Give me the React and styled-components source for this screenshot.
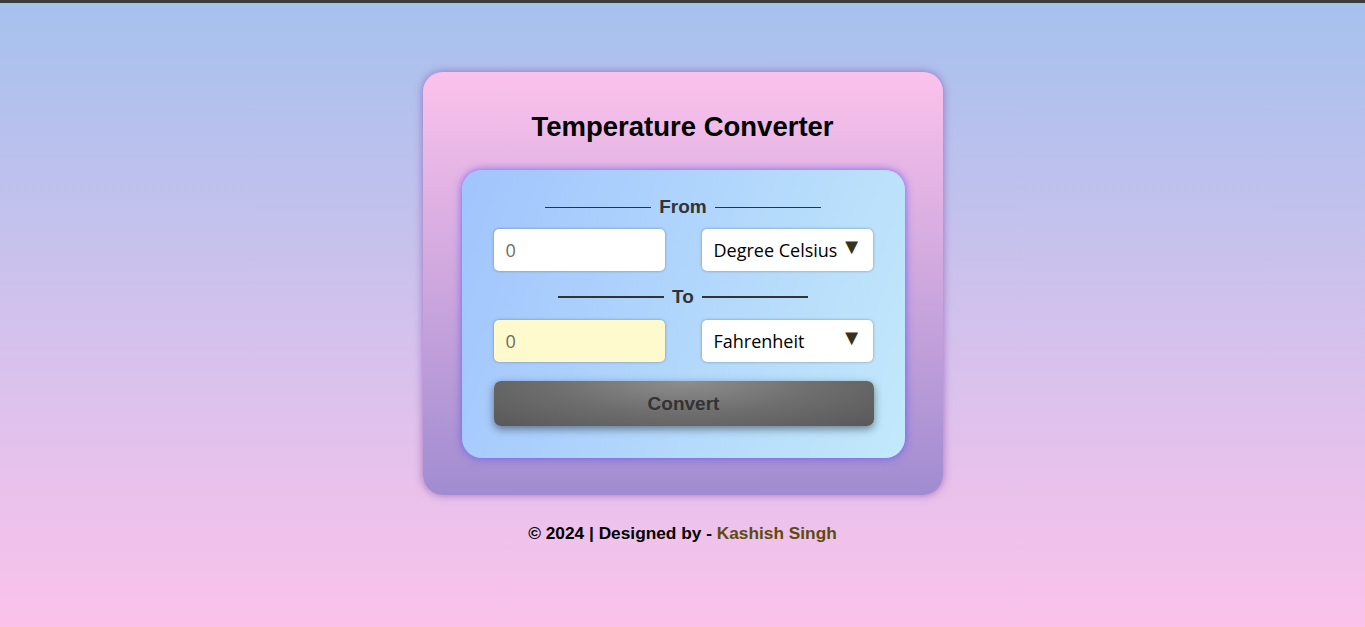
import React, { useState } from "react";
import styled, { createGlobalStyle } from "styled-components";

const GlobalStyle = createGlobalStyle`
  * { box-sizing: border-box; }
  html, body { margin: 0; padding: 0; }
  body {
    font-family: "Liberation Sans", Arial, sans-serif;
    border-top: 3px solid #3b3b3b;
    min-height: 100vh;
    background: linear-gradient(to bottom, #a6c1ee, #fbc2eb);
  }
`;

const Page = styled.div`
  min-height: calc(100vh - 3px);
  display: flex;
  flex-direction: column;
  align-items: center;
  padding-top: 69px;
`;

const Card = styled.div`
  width: 520px;
  height: 423px;
  border-radius: 20px;
  background: linear-gradient(to bottom, #fbc2eb, #a18cd1);
  box-shadow: 0 0 8px rgba(120, 60, 160, 0.6);
  display: flex;
  flex-direction: column;
  align-items: center;
  padding-top: 39px;
`;

const Title = styled.h1`
  margin: 0 0 28px;
  font-size: 27.5px;
  font-weight: bold;
  color: #000;
  line-height: 31px;
`;

const Panel = styled.div`
  width: 443px;
  height: 288px;
  margin-left: 1px;
  border-radius: 20px;
  background: linear-gradient(110deg, #a1c4fd, #c2e9fb);
  box-shadow: 0 0 9px rgba(100, 90, 240, 0.9);
  padding: 26px 32px 0 32px;
  display: flex;
  flex-direction: column;
`;

const Divider = styled.div`
  display: flex;
  align-items: center;
  justify-content: center;
  gap: 8px;
  height: 22px;
  font-size: 19px;
  font-weight: bold;
  color: #333;
  margin-top: ${(p) => p.top || 0}px;
  &::before,
  &::after {
    content: "";
    width: 106px;
    height: ${(p) => (p.thick ? 2 : 1)}px;
    background: #333;
  }
`;

const Row = styled.div`
  display: flex;
  justify-content: space-between;
  margin-top: ${(p) => p.top}px;
`;

const Input = styled.input`
  width: 171px;
  height: 42px;
  border: none;
  border-radius: 5px;
  padding: 0 12px;
  font-size: 18px;
  font-family: "Open Sans", "Noto Sans", sans-serif;
  background: ${(p) => (p.result ? "#fffacd" : "#fff")};
  box-shadow: 0 0 3px rgba(0, 0, 0, 0.35);
  outline: none;
  &::placeholder { color: #6b6b6b; font-weight: 500; }
`;

const SelectBox = styled.div`
  width: 171px;
  height: 42px;
  border-radius: 5px;
  background: #fff;
  box-shadow: 0 0 3px rgba(0, 0, 0, 0.35);
  display: flex;
  align-items: center;
  padding: 0 10px 0 12px;
`;

const Select = styled.select`
  flex: 1;
  min-width: 0;
  appearance: none;
  border: none;
  background: transparent;
  font-family: "Open Sans", "Noto Sans", sans-serif;
  font-size: 18px;
  color: #000;
  padding: 0;
  outline: none;
`;

const Arrow = styled.span`
  font-size: 22px;
  color: #35331a;
  line-height: 1;
  margin-top: -7px;
`;

const Button = styled.button`
  margin-top: 19px;
  width: 380px;
  height: 45px;
  border: none;
  border-radius: 7px;
  background: radial-gradient(ellipse at 50% 0%, #8e8e8e 0%, #6e6e6e 50%, #585858 100%);
  box-shadow: 0 3px 8px rgba(0, 0, 0, 0.45);
  font-family: "Liberation Sans", Arial, sans-serif;
  font-size: 19px;
  font-weight: bold;
  color: #333;
  cursor: pointer;
`;

const Footer = styled.p`
  margin: 28px 0 0;
  font-size: 17.3px;
  font-weight: bold;
  color: #000;
`;

const Name = styled.span`
  color: #5c4b0f;
`;

const units = ["Degree Celsius", "Fahrenheit", "Kelvin"];

function UnitSelect({ value, onChange }) {
  return (
    <SelectBox>
      <Select value={value} onChange={(e) => onChange(e.target.value)}>
        {units.map((u) => (
          <option key={u}>{u}</option>
        ))}
      </Select>
      <Arrow>▼</Arrow>
    </SelectBox>
  );
}

export default function App() {
  const [from, setFrom] = useState("Degree Celsius");
  const [to, setTo] = useState("Fahrenheit");
  const [value, setValue] = useState("");
  const [result, setResult] = useState("");

  const convert = () => {
    const n = parseFloat(value);
    if (isNaN(n)) return;
    let c = n;
    if (from === "Fahrenheit") c = ((n - 32) * 5) / 9;
    if (from === "Kelvin") c = n - 273.15;
    let out = c;
    if (to === "Fahrenheit") out = (c * 9) / 5 + 32;
    if (to === "Kelvin") out = c + 273.15;
    setResult(out.toFixed(2));
  };

  return (
    <>
      <GlobalStyle />
      <Page>
        <Card>
          <Title>Temperature Converter</Title>
          <Panel>
            <Divider>From</Divider>
            <Row top={11}>
              <Input placeholder="0" value={value} onChange={(e) => setValue(e.target.value)} />
              <UnitSelect value={from} onChange={setFrom} />
            </Row>
            <Divider thick top={15}>To</Divider>
            <Row top={12}>
              <Input result placeholder="0" value={result} readOnly />
              <UnitSelect value={to} onChange={setTo} />
            </Row>
            <Button onClick={convert}>Convert</Button>
          </Panel>
        </Card>
        <Footer>
          © 2024 | Designed by - <Name>Kashish Singh</Name>
        </Footer>
      </Page>
    </>
  );
}
